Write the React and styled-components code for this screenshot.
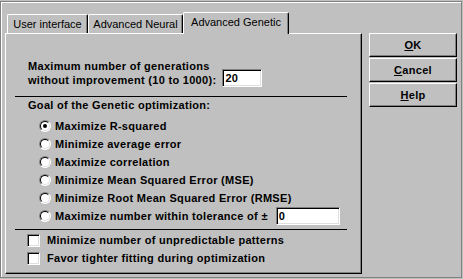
import styled, { createGlobalStyle } from 'styled-components';

const GlobalStyle = createGlobalStyle`
  * {
    box-sizing: border-box;
  }
  body {
    margin: 0;
    background: #c0c0c0;
    font-family: "Liberation Sans", Arial, sans-serif;
    font-size: 11px;
    color: #000;
  }
`;

const goals = [
  'Maximize R-squared',
  'Minimize average error',
  'Maximize correlation',
  'Minimize Mean Squared Error (MSE)',
  'Minimize Root Mean Squared Error (RMSE)',
];

const tabs = [
  { label: 'User interface', width: 81 },
  { label: 'Advanced Neural', width: 95 },
  { label: 'Advanced Genetic', width: 106 },
];

export default function App() {
  return (
    <>
      <GlobalStyle />
      <Window>
        <TabsArea>
          <TabStrip>
            {tabs.map((t, i) => (
              <Tab key={t.label} $width={t.width} $active={i === 2}>
                {t.label}
              </Tab>
            ))}
          </TabStrip>
          <Panel>
            <GenBlock>
              <div>Maximum number of generations</div>
              <InlineRow>
                without improvement (10 to 1000):
                <TextBox $width={40} defaultValue="20" />
              </InlineRow>
            </GenBlock>
            <Separator />
            <Heading>Goal of the Genetic optimization:</Heading>
            <RadioList>
              {goals.map((g, i) => (
                <OptionRow key={g}>
                  <Radio $checked={i === 0} />
                  {g}
                </OptionRow>
              ))}
              <OptionRow>
                <Radio />
                Maximize number within tolerance of ±
                <TextBox $width={64} $shift={4} defaultValue="0" />
              </OptionRow>
            </RadioList>
            <Separator $gap={4} />
            <CheckList>
              <OptionRow>
                <Check />
                Minimize number of unpredictable patterns
              </OptionRow>
              <OptionRow>
                <Check />
                Favor tighter fitting during optimization
              </OptionRow>
            </CheckList>
          </Panel>
        </TabsArea>
        <Buttons>
          <Button>
            <u>O</u>K
          </Button>
          <Button>
            <u>C</u>ancel
          </Button>
          <Button>
            <u>H</u>elp
          </Button>
        </Buttons>
      </Window>
    </>
  );
}

const Window = styled.div`
  display: flex;
  gap: 7px;
  width: 462px;
  height: 277px;
  margin-top: 1px;
  padding: 10px 0 0 4px;
  border: 1px solid #808080;
  box-shadow: inset 1px 1px 0 #fff;
`;

const TabsArea = styled.div`
  display: flex;
  flex-direction: column;
  width: 357px;
`;

const TabStrip = styled.div`
  display: flex;
  align-items: flex-end;
  height: 21px;
  padding-left: 2px;
`;

const Tab = styled.div`
  position: relative;
  width: ${(p) => p.$width}px;
  height: ${(p) => (p.$active ? '22px' : '19px')};
  margin-bottom: ${(p) => (p.$active ? '-1px' : '0')};
  padding-top: 2px;
  line-height: 15px;
  text-align: center;
  background: #c0c0c0;
  border: 1px solid #fff;
  border-right-color: #000;
  border-bottom: none;
  border-radius: 2px 2px 0 0;
  box-shadow: inset -1px 0 0 #808080;
  white-space: nowrap;
  z-index: ${(p) => (p.$active ? 1 : 0)};
`;

const Panel = styled.div`
  display: flex;
  flex-direction: column;
  height: 241px;
  padding: 0 14px 0 9px;
  border: 1px solid #fff;
  border-right-color: #000;
  border-bottom-color: #000;
  box-shadow: inset -1px -1px 0 #808080;
  font-weight: bold;
  letter-spacing: 0.3px;
`;

const GenBlock = styled.div`
  margin-top: 25px;
  padding-left: 13px;
  line-height: 14px;
`;

const InlineRow = styled.div`
  display: flex;
  align-items: flex-end;
  gap: 4px;
  height: 14px;
`;

const TextBox = styled.input`
  flex: none;
  width: ${(p) => p.$width}px;
  height: 18px;
  margin-left: ${(p) => p.$shift ?? 2}px;
  padding: 0 2px;
  font: bold 11px "Liberation Sans", Arial, sans-serif;
  letter-spacing: 0.3px;
  color: #000;
  background: #fff;
  border: 1px solid;
  border-color: #808080 #fff #fff #808080;
  box-shadow: inset 1px 1px 0 #000, inset -1px -1px 0 #dfdfdf;
  outline: none;
`;

const Separator = styled.div`
  height: 1px;
  margin-top: ${(p) => p.$gap ?? 9}px;
  background: #000;
`;

const Heading = styled.div`
  margin-top: 1px;
  padding-left: 13px;
  line-height: 14px;
`;

const RadioList = styled.div`
  display: flex;
  flex-direction: column;
  margin-top: 5px;
  padding-left: 24px;
`;

const CheckList = styled.div`
  display: flex;
  flex-direction: column;
  margin-top: 1px;
  padding-left: 12px;
`;

const OptionRow = styled.div`
  display: flex;
  align-items: center;
  gap: 4px;
  height: 18px;
  white-space: nowrap;
`;

const Radio = styled.span`
  position: relative;
  flex: none;
  width: 12px;
  height: 12px;
  border-radius: 50%;
  border: 1px solid;
  border-color: #808080 #fff #fff #808080;
  background: #fff;

  &::before {
    content: '';
    position: absolute;
    inset: 0;
    border-radius: 50%;
    border: 1px solid;
    border-color: #000 #dfdfdf #dfdfdf #000;
  }

  &::after {
    content: '';
    display: ${(p) => (p.$checked ? 'block' : 'none')};
    position: absolute;
    left: 3px;
    top: 3px;
    width: 4px;
    height: 4px;
    border-radius: 50%;
    background: #000;
  }
`;

const Check = styled.span`
  flex: none;
  width: 13px;
  height: 13px;
  margin-right: 3px;
  background: #fff;
  border: 1px solid;
  border-color: #808080 #fff #fff #808080;
  box-shadow: inset 1px 1px 0 #000, inset -1px -1px 0 #dfdfdf;
`;

const Buttons = styled.div`
  display: flex;
  flex-direction: column;
  gap: 1px;
  padding-top: 21px;
`;

const Button = styled.button`
  width: 88px;
  height: 24px;
  padding: 0;
  font: bold 11px "Liberation Sans", Arial, sans-serif;
  letter-spacing: 0.3px;
  color: #000;
  background: #c0c0c0;
  border: 1px solid;
  border-color: #fff #000 #000 #fff;
  box-shadow: inset -1px -1px 0 #808080;
`;
